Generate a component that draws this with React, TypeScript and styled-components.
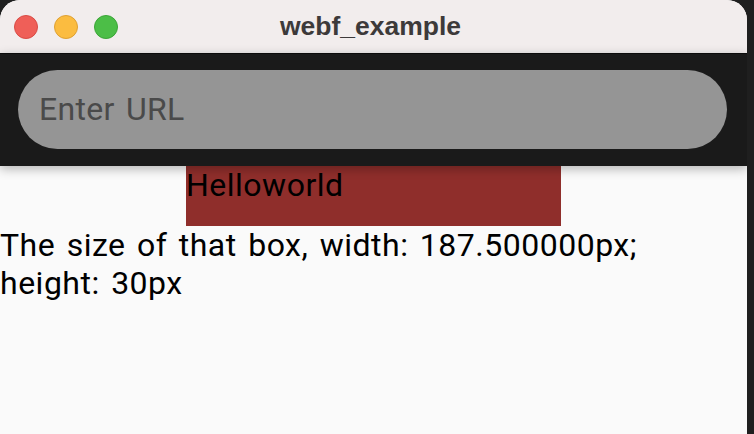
import React from 'react';
import styled, { createGlobalStyle } from 'styled-components';

const GlobalStyle = createGlobalStyle`
  html, body {
    margin: 0;
    padding: 0;
    background-color: #1f1f1f;
  }
  * {
    box-sizing: border-box;
  }
`;

const Window = styled.div`
  width: 747px;
  height: 434px;
  display: flex;
  flex-direction: column;
  background-color: #fafafa;
  border-radius: 20px 20px 0 0;
  overflow: hidden;
  font-family: Roboto, "Liberation Sans", sans-serif;
`;

const TitleBar = styled.div`
  height: 53px;
  flex-shrink: 0;
  display: flex;
  align-items: center;
  padding-left: 14px;
  background-color: #f2eded;
  > .title {
    flex-grow: 1;
    text-align: center;
    margin-right: 124px;
    font-family: "Liberation Sans", Arial, sans-serif;
    font-weight: bold;
    font-size: 26.5px;
    color: #3d3a3a;
    padding-bottom: 1px;
  }
`;

const Lights = styled.div`
  display: flex;
  gap: 16px;
`;

const Light = styled.span<{ $color: string; $edge: string }>`
  width: 24px;
  height: 24px;
  border-radius: 50%;
  background-color: ${(p) => p.$color};
  border: 1px solid ${(p) => p.$edge};
`;

const Toolbar = styled.div`
  flex-shrink: 0;
  position: relative;
  z-index: 1;
  padding: 16px 20px 17px 18px;
  background-color: #1a1a1a;
  border-top: 1px solid #0c0c0c;
  box-shadow: 0 3px 10px rgba(0, 0, 0, 0.28);
  > input {
    display: block;
    width: 100%;
    height: 79px;
    border: none;
    outline: none;
    border-radius: 40px;
    background-color: #959595;
    padding: 0 20px 2px 21px;
    font-family: Roboto, "Liberation Sans", sans-serif;
    font-size: 32px;
    letter-spacing: 0.3px;
    word-spacing: 3px;
    color: #333;
    &::placeholder {
      color: #4a4a4a;
    }
  }
`;

const Content = styled.div`
  flex-grow: 1;
  font-size: 32px;
  letter-spacing: 0.5px;
  word-spacing: 3px;
  color: #000;
  > p {
    margin: 0;
  }
`;

const SizedBox = styled.div`
  width: 375px;
  height: 60px;
  margin: 0 auto;
  background-color: #8f2e2b;
`;

function App() {
  return (
    <>
      <GlobalStyle />
      <Window>
        <TitleBar>
          <Lights>
            <Light $color="#ef5f58" $edge="#d94c46" />
            <Light $color="#fbbc40" $edge="#dea033" />
            <Light $color="#4cbe47" $edge="#3ca538" />
          </Lights>
          <div className="title">webf_example</div>
        </TitleBar>
        <Toolbar>
          <input type="text" placeholder="Enter URL" />
        </Toolbar>
        <Content>
          <SizedBox>Helloworld</SizedBox>
          <p>The size of that box, width: 187.500000px; height: 30px</p>
        </Content>
      </Window>
    </>
  );
}

export default App;
